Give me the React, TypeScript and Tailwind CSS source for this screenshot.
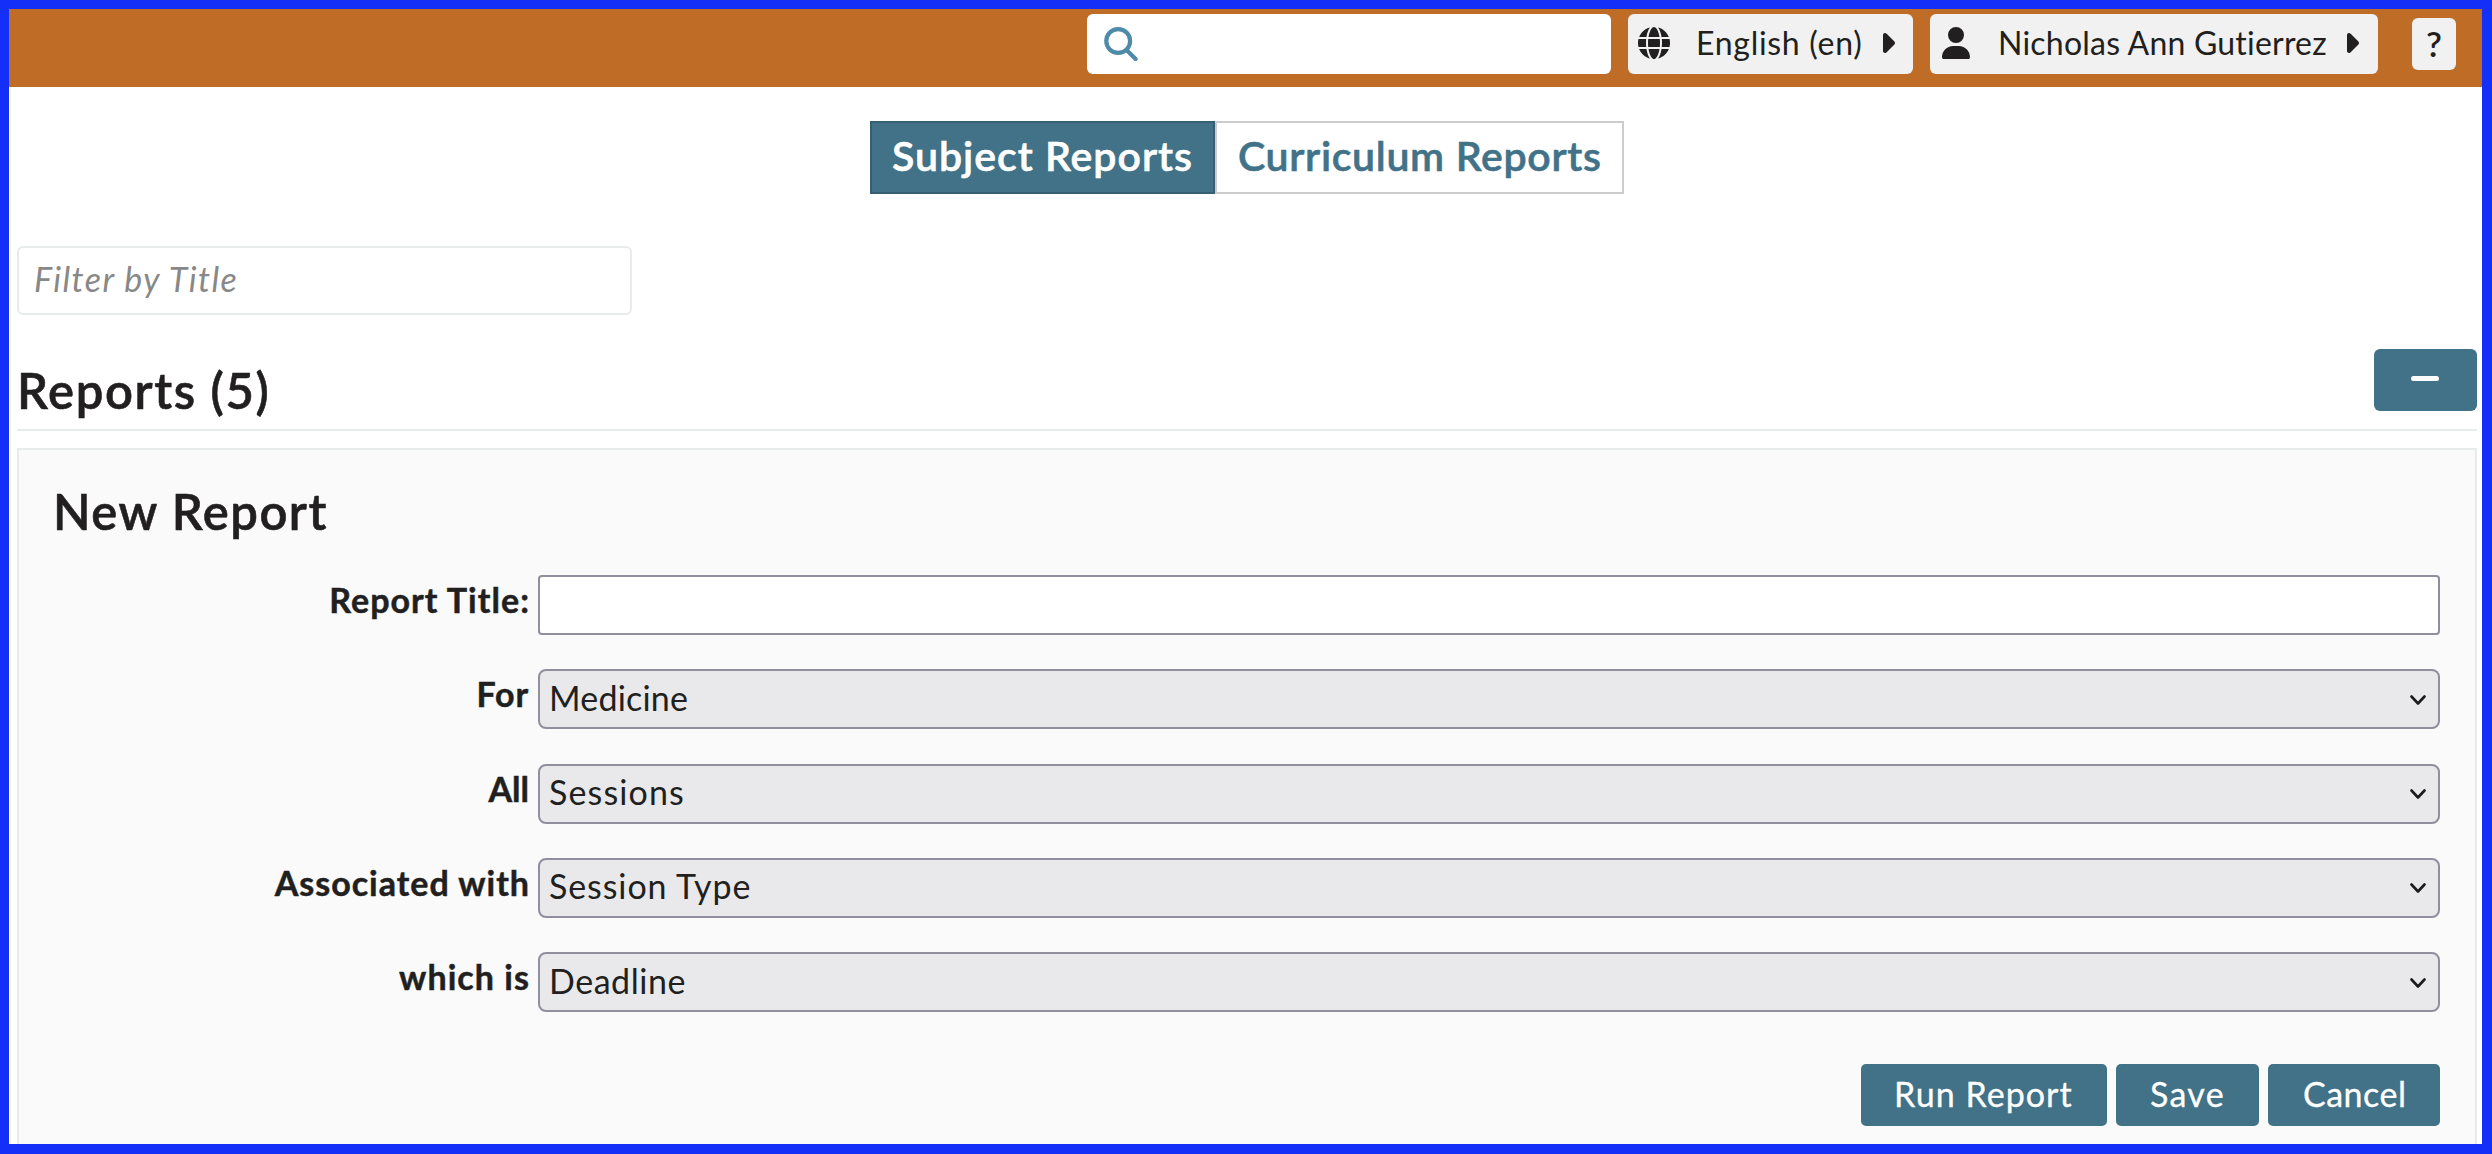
import type { ReactNode } from 'react';
import { FaGlobe, FaUser, FaCaretRight } from 'react-icons/fa6';

type Option = { label: string; labelSpacing: string; value: string; spacing: string };

const options: Option[] = [
  { label: 'For', labelSpacing: 'tracking-[0.88px] pr-[1px]', value: 'Medicine', spacing: 'tracking-[0.21px] pl-[9px]' },
  { label: 'All', labelSpacing: 'tracking-[0px] pr-[1px]', value: 'Sessions', spacing: 'tracking-[1.12px] pl-[9px]' },
  { label: 'Associated with', labelSpacing: 'tracking-[1px] pr-0', value: 'Session Type', spacing: 'tracking-[0.9px] pl-[9px]' },
  { label: 'which is', labelSpacing: 'tracking-[1.05px] pr-0', value: 'Deadline', spacing: 'tracking-[0.55px] pl-[9px]' },
];

function Label({ children, className }: { children: ReactNode; className: string }) {
  return (
    <label className={`flex w-[511px] shrink-0 items-center justify-end pb-[10px] text-[34px] leading-none font-bold whitespace-nowrap [-webkit-text-stroke:0.5px] ${className}`}>
      {children}
    </label>
  );
}

function SearchIcon() {
  return (
    <svg viewBox="0 0 34 34" className="h-[34px] w-[34px]" fill="none" stroke="#4d8ba8" strokeWidth="4.2" strokeLinecap="round">
      <circle cx="14.2" cy="14" r="11.9" />
      <path d="M22.8 23.2 31.6 32" />
    </svg>
  );
}

function Header() {
  return (
    <header className="flex h-[78px] shrink-0 items-start justify-end bg-[#be6c26] pt-[5px] text-[32px] leading-none">
      <div className="flex h-[60px] w-[524px] items-center rounded-[6px] bg-white pl-[17px]">
        <SearchIcon />
      </div>
      <button className="ml-[17px] flex h-[60px] w-[285px] items-center rounded-[6px] bg-[#f1f1f1] pl-[10px]">
        <FaGlobe className="mb-[2px] h-8 w-8" />
        <span className="ml-[26px] w-[181px] pb-[2px] text-left tracking-[0.7px] whitespace-nowrap">English (en)</span>
        <FaCaretRight className="mb-[2px] h-8 w-5" />
      </button>
      <button className="ml-[17px] flex h-[60px] w-[448px] items-center rounded-[6px] bg-[#f1f1f1] pl-[12px]">
        <FaUser className="mb-[2px] h-8 w-7" />
        <span className="ml-[28px] w-[343px] pb-[2px] text-left tracking-[0.22px] whitespace-nowrap">Nicholas Ann Gutierrez</span>
        <FaCaretRight className="mb-[2px] h-8 w-5" />
      </button>
      <button className="mt-1 mr-[26px] ml-[34px] flex h-[52px] w-[44px] items-center justify-center rounded-[6px] bg-[#f1f1f1] pb-[2px] text-[35px] font-semibold">
        ?
      </button>
    </header>
  );
}

function ActionButton({ children, className }: { children: ReactNode; className: string }) {
  return (
    <button className={`flex h-[62px] items-center rounded-[5px] bg-[#417288] pb-[3px] text-[34px] leading-none whitespace-nowrap text-white [-webkit-text-stroke:0.3px] ${className}`}>
      {children}
    </button>
  );
}

export default function App() {
  return (
    <div className="flex h-[1154px] w-[2492px] flex-col overflow-hidden border-[10px] border-t-[9px] border-l-[9px] border-[#1430f8] bg-white font-[Lato,sans-serif] text-[#211f20]">
      <Header />
      <nav className="mt-[34px] ml-[861px] flex h-[73px] shrink-0 text-[41px] leading-none font-semibold whitespace-nowrap [-webkit-text-stroke:0.6px]">
        <button className="flex w-[345px] items-center border-2 border-[#355f72] bg-[#417288] pb-[5px] pl-[20px] tracking-[1px] text-white">Subject Reports</button>
        <button className="flex w-[409px] items-center border-2 border-[#cccccc] bg-white pb-[5px] pl-[21px] tracking-[0.68px] text-[#417288]">Curriculum Reports</button>
      </nav>
      <main className="flex min-h-0 grow flex-col pr-[5px] pl-2">
        <div className="mt-[52px] flex h-[69px] w-[615px] shrink-0 items-center rounded-[6px] border-2 border-[#e7ecea] pb-[3px] pl-[15px] text-[34px] leading-none tracking-[1.45px] text-[#888888] italic">
          Filter by Title
        </div>
        <div className="mt-[34px] flex h-[82px] shrink-0 justify-between border-b-2 border-[#e7ecea]">
          <h2 className="mt-[11px] text-[49px] leading-[60px] font-semibold tracking-[1.6px] [-webkit-text-stroke:0.6px]">Reports (5)</h2>
          <button className="flex h-[62px] w-[103px] items-center justify-center rounded-[6px] bg-[#417288] pr-[2px] pb-[3px]">
            <span className="h-[5px] w-7 rounded-full bg-white" />
          </button>
        </div>
        <section className="mt-[17px] flex grow flex-col border-2 border-b-0 border-[#e7ecea] bg-[#fafafa] pr-[35px]">
          <h3 className="mt-[31px] ml-[34px] text-[49px] leading-[60px] font-semibold tracking-[1.5px] [-webkit-text-stroke:0.6px]">New Report</h3>
          <div className="mt-[34px] flex flex-col gap-[34.25px]">
            <div className="flex h-[60px]">
              <Label className="pr-0 tracking-[1.05px]">Report Title:</Label>
              <div className="ml-2 grow rounded-[4px] border-2 border-[#8f8f9d] bg-white" />
            </div>
            {options.map((o) => (
              <div key={o.label} className="flex h-[60px]">
                <Label className={o.labelSpacing}>{o.label}</Label>
                <div className={`ml-2 flex grow items-center justify-between rounded-[8px] border-2 border-[#8f8f9d] bg-[#e9e9eb] pr-[12px] text-[34px] leading-none ${o.spacing}`}>
                  <span className="pb-[3px]">{o.value}</span>
                  <svg viewBox="0 0 16 11" className="mt-[2px] h-[11px] w-4" fill="none" stroke="#1c1b1f" strokeWidth="2.6" strokeLinecap="round" strokeLinejoin="round">
                    <path d="M1.5 1.5 8 8.5 14.5 1.5" />
                  </svg>
                </div>
              </div>
            ))}
          </div>
          <div className="mt-[52px] flex justify-end gap-[9px]">
            <ActionButton className="w-[246px] pl-[33px] tracking-[1.05px]">Run Report</ActionButton>
            <ActionButton className="w-[143px] pl-[34px] tracking-[1.3px]">Save</ActionButton>
            <ActionButton className="w-[172px] pl-[35px] tracking-[0.5px]">Cancel</ActionButton>
          </div>
        </section>
      </main>
    </div>
  );
}
